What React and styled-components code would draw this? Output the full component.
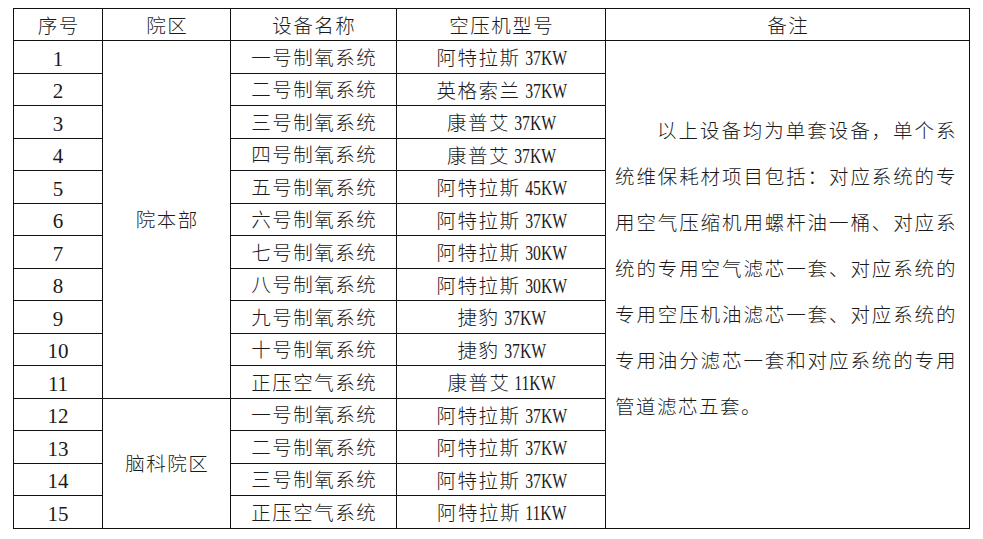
import React from "react";
import styled, { createGlobalStyle } from "styled-components";

const GlobalStyle = createGlobalStyle`
  html, body {
    margin: 0;
    padding: 0;
    background: #ffffff;
  }
`;

const Page = styled.div`
  padding: 8px 0 0 13px;
  font-family: "Liberation Serif", "Noto Sans CJK SC", serif;
  color: #1a1a1a;
`;

const Table = styled.table`
  border-collapse: collapse;
  table-layout: fixed;
  width: 956px;
`;

const HeadCell = styled.th`
  height: 32px;
  padding: 4px 0 0;
  box-sizing: border-box;
  border: 1px solid #111;
  font-weight: 300;
  font-size: 19.5px;
  letter-spacing: 1.5px;
  text-indent: 1.5px;
  line-height: 24px;
  text-align: center;
  vertical-align: middle;
`;

const Cell = styled.td`
  height: 32.5px;
  padding: 4px 0 0;
  box-sizing: border-box;
  border: 1px solid #111;
  font-weight: 300;
  font-size: ${(p) => (p.$num ? "21px" : "19.5px")};
  letter-spacing: ${(p) => (p.$num ? "0" : "1.5px")};
  text-indent: ${(p) => (p.$num ? "0" : "1.5px")};
  line-height: 24px;
  text-align: center;
  vertical-align: middle;
  white-space: nowrap;
`;

/* half-width latin, like the Song face in the source document */
const Power = styled.span`
  display: inline-block;
  font-size: 21px;
  letter-spacing: 0;
  transform: scaleX(0.75);
  transform-origin: left center;
  margin-left: 3px;
  margin-right: -14px;
`;

const NoteCell = styled.td`
  border: 1px solid #111;
  padding: 68px 0 0 9px;
  vertical-align: top;
`;

const Note = styled.p`
  margin: 0;
  width: 342px;
  font-size: 19.5px;
  letter-spacing: 1.5px;
  font-weight: 300;
  line-height: 46px;
  text-indent: 42px;
  text-align: justify;
`;

const campusA = [
  ["一号制氧系统", "阿特拉斯", "37KW"],
  ["二号制氧系统", "英格索兰", "37KW"],
  ["三号制氧系统", "康普艾", "37KW"],
  ["四号制氧系统", "康普艾", "37KW"],
  ["五号制氧系统", "阿特拉斯", "45KW"],
  ["六号制氧系统", "阿特拉斯", "37KW"],
  ["七号制氧系统", "阿特拉斯", "30KW"],
  ["八号制氧系统", "阿特拉斯", "30KW"],
  ["九号制氧系统", "捷豹", "37KW"],
  ["十号制氧系统", "捷豹", "37KW"],
  ["正压空气系统", "康普艾", "11KW"],
];

const campusB = [
  ["一号制氧系统", "阿特拉斯", "37KW"],
  ["二号制氧系统", "阿特拉斯", "37KW"],
  ["三号制氧系统", "阿特拉斯", "37KW"],
  ["正压空气系统", "阿特拉斯", "11KW"],
];

const groups = [
  { name: "院本部", rows: campusA },
  { name: "脑科院区", rows: campusB },
];

const total = campusA.length + campusB.length;

export default function App() {
  let n = 0;
  return (
    <Page>
      <GlobalStyle />
      <Table>
        <colgroup>
          <col style={{ width: 89 }} />
          <col style={{ width: 128 }} />
          <col style={{ width: 166 }} />
          <col style={{ width: 209 }} />
          <col style={{ width: 364 }} />
        </colgroup>
        <thead>
          <tr>
            <HeadCell>序号</HeadCell>
            <HeadCell>院区</HeadCell>
            <HeadCell>设备名称</HeadCell>
            <HeadCell>空压机型号</HeadCell>
            <HeadCell>备注</HeadCell>
          </tr>
        </thead>
        <tbody>
          {groups.map((g, gi) =>
            g.rows.map((r, ri) => {
              n += 1;
              return (
                <tr key={n}>
                  <Cell $num>{n}</Cell>
                  {ri === 0 && <Cell rowSpan={g.rows.length}>{g.name}</Cell>}
                  <Cell>{r[0]}</Cell>
                  <Cell>
                    {r[1]}
                    <Power>{r[2]}</Power>
                  </Cell>
                  {gi === 0 && ri === 0 && (
                    <NoteCell rowSpan={total}>
                      <Note>
                        以上设备均为单套设备，单个系统维保耗材项目包括：对应系统的专用空气压缩机用螺杆油一桶、对应系统的专用空气滤芯一套、对应系统的专用空压机油滤芯一套、对应系统的专用油分滤芯一套和对应系统的专用管道滤芯五套。
                      </Note>
                    </NoteCell>
                  )}
                </tr>
              );
            })
          )}
        </tbody>
      </Table>
    </Page>
  );
}
